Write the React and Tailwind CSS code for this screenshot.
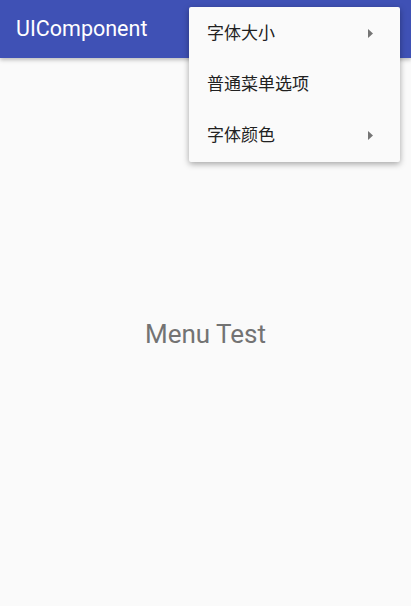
import React from "react";

const items = [
  { label: "字体大小", sub: true },
  { label: "普通菜单选项", sub: false },
  { label: "字体颜色", sub: true },
];

export default function App() {
  return (
    <div className="relative flex h-[606px] w-full flex-col bg-[#fafafa] font-['Roboto','Noto_Sans_CJK_SC',sans-serif]">
      {/* app bar */}
      <div className="z-10 flex h-[58px] shrink-0 items-center bg-[#3f51b5] px-4 shadow-[0_2px_4px_rgba(0,0,0,0.25)]">
        <span className="text-[21.5px] text-white">UIComponent</span>
      </div>

      <div className="flex flex-1 items-center justify-center pt-[4px]">
        <span className="text-[26px] text-[#737373]">Menu Test</span>
      </div>

      {/* overflow menu */}
      <div className="absolute left-[189px] top-[7px] z-20 w-[211px] rounded-[2px] bg-[#fafafa] py-[1px] shadow-[0_2px_6px_rgba(0,0,0,0.35)]">
        {items.map((it) => (
          <div key={it.label} className="flex h-[51px] items-center justify-between pl-[18px] pr-[27px]">
            <span className="text-[17px] text-[#212121]">{it.label}</span>
            {it.sub && (
              <svg width="5" height="9" viewBox="0 0 5 9">
                <path d="M0 0 L5 4.5 L0 9 Z" fill="#757575" />
              </svg>
            )}
          </div>
        ))}
      </div>
    </div>
  );
}
